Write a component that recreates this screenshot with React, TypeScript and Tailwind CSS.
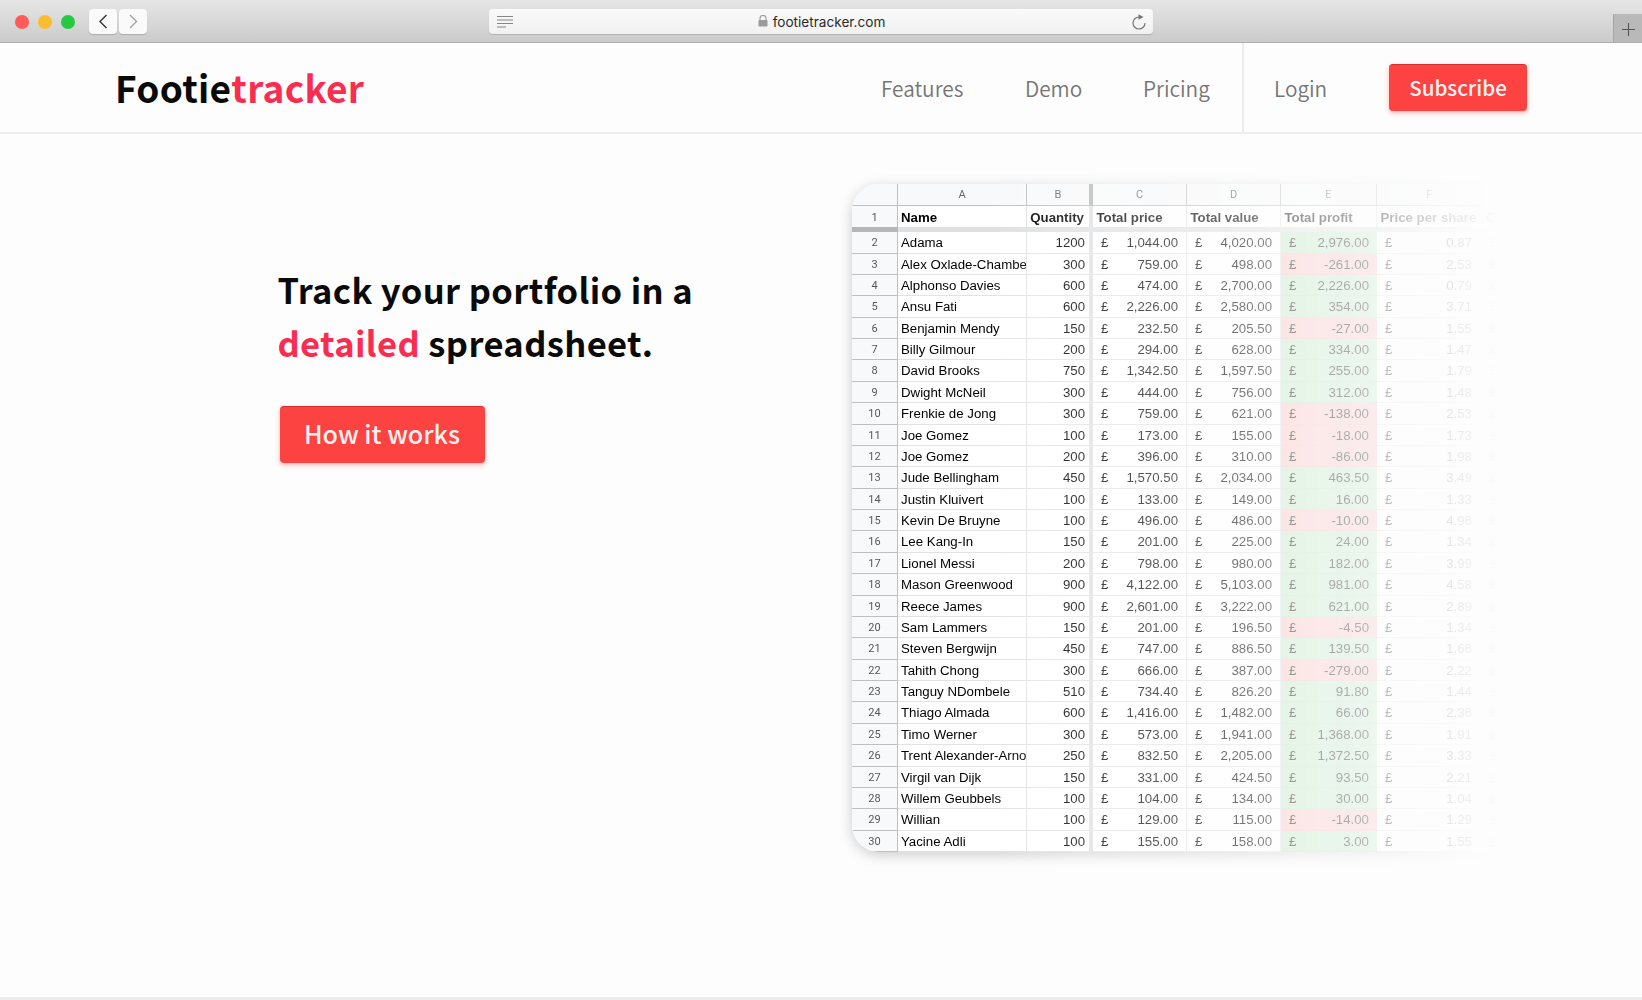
import React from "react";

type Row = [string, string, string, string, string];

const rows: Row[] = [
  ["Adama", "1200", "1,044.00", "4,020.00", "2,976.00"],
  ["Alex Oxlade-Chambe", "300", "759.00", "498.00", "-261.00"],
  ["Alphonso Davies", "600", "474.00", "2,700.00", "2,226.00"],
  ["Ansu Fati", "600", "2,226.00", "2,580.00", "354.00"],
  ["Benjamin Mendy", "150", "232.50", "205.50", "-27.00"],
  ["Billy Gilmour", "200", "294.00", "628.00", "334.00"],
  ["David Brooks", "750", "1,342.50", "1,597.50", "255.00"],
  ["Dwight McNeil", "300", "444.00", "756.00", "312.00"],
  ["Frenkie de Jong", "300", "759.00", "621.00", "-138.00"],
  ["Joe Gomez", "100", "173.00", "155.00", "-18.00"],
  ["Joe Gomez", "200", "396.00", "310.00", "-86.00"],
  ["Jude Bellingham", "450", "1,570.50", "2,034.00", "463.50"],
  ["Justin Kluivert", "100", "133.00", "149.00", "16.00"],
  ["Kevin De Bruyne", "100", "496.00", "486.00", "-10.00"],
  ["Lee Kang-In", "150", "201.00", "225.00", "24.00"],
  ["Lionel Messi", "200", "798.00", "980.00", "182.00"],
  ["Mason Greenwood", "900", "4,122.00", "5,103.00", "981.00"],
  ["Reece James", "900", "2,601.00", "3,222.00", "621.00"],
  ["Sam Lammers", "150", "201.00", "196.50", "-4.50"],
  ["Steven Bergwijn", "450", "747.00", "886.50", "139.50"],
  ["Tahith Chong", "300", "666.00", "387.00", "-279.00"],
  ["Tanguy NDombele", "510", "734.40", "826.20", "91.80"],
  ["Thiago Almada", "600", "1,416.00", "1,482.00", "66.00"],
  ["Timo Werner", "300", "573.00", "1,941.00", "1,368.00"],
  ["Trent Alexander-Arno", "250", "832.50", "2,205.00", "1,372.50"],
  ["Virgil van Dijk", "150", "331.00", "424.50", "93.50"],
  ["Willem Geubbels", "100", "104.00", "134.00", "30.00"],
  ["Willian", "100", "129.00", "115.00", "-14.00"],
  ["Yacine Adli", "100", "155.00", "158.00", "3.00"],
];

const perShare = (price: string, quantity: string) =>
  (parseFloat(price.replace(",", "")) / parseFloat(quantity)).toFixed(2);

const COLS = "grid grid-rows-[100%] grid-cols-[46px_129px_62px_4px_94px_94px_96px_105px_1fr]";

function Money({ value, className = "pr-[9px]" }: { value: string; className?: string }) {
  return (
    <div className={"flex items-center justify-between border-b border-[#e2e3e3] pl-[8px] " + className}>
      <span>£</span>
      <span>{value}</span>
    </div>
  );
}

function Sheet() {
  return (
    <div className="h-[740px] w-[700px] pt-[30px] pl-[30px] [mask-image:linear-gradient(to_right,#000_0px,#000_170px,rgba(0,0,0,0.82)_235px,rgba(0,0,0,0.68)_310px,rgba(0,0,0,0.58)_400px,rgba(0,0,0,0.38)_480px,rgba(0,0,0,0.27)_560px,rgba(0,0,0,0.08)_635px,transparent_678px)]">
      <div className="h-[668px] w-[670px] overflow-hidden rounded-l-[27px] bg-white font-['Liberation_Sans',Arial,sans-serif] text-[13.25px] text-black shadow-[0_3px_14px_rgba(0,0,0,0.2)]">
        <div className={COLS + " h-[22px] bg-[#f8f9fa] font-['Roboto',sans-serif] text-[11px] text-[#66696c]"}>
          <div className="border-r border-b border-[#c0c0c0]" />
          {["A", "B"].map((c) => (
            <div key={c} className={"flex items-center justify-center border-b border-[#c0c0c0] pt-[2px] " + (c === "A" ? "border-r" : "")}>{c}</div>
          ))}
          <div className="bg-[#b7b7b7]" />
          {["C", "D", "E", "F"].map((c) => (
            <div key={c} className="flex items-center justify-center border-r border-b border-[#c0c0c0] pt-[2px]">{c}</div>
          ))}
          <div />
        </div>
        <div className={COLS + " h-[21px] items-stretch font-bold leading-[24px] whitespace-nowrap"}>
          <div className="border-r border-[#c0c0c0] bg-[#f8f9fa] text-center font-['Roboto',sans-serif] text-[11px] font-normal text-[#55585b]">1</div>
          <div className="border-r border-[#e2e3e3] pl-[3px]">Name</div>
          <div className="pr-[5px] text-right">Quantity</div>
          <div className="bg-[#dfe0e2]" />
          <div className="border-r border-[#e2e3e3] pl-[3.5px]">Total price</div>
          <div className="border-r border-[#e2e3e3] pl-[3.5px]">Total value</div>
          <div className="border-r border-[#e2e3e3] pl-[3.5px]">Total profit</div>
          <div className="border-r border-[#e2e3e3] pl-[3.5px]">Price per share</div>
          <div className="pl-[4px]">C</div>
        </div>
        <div className="flex h-[5px] bg-[#dfe0e2]">
          <div className="w-[46px] bg-[#b7b7b7]" />
        </div>
        {rows.map(([name, qty, price, value, profit], i) => (
          <div key={i} className={COLS + " leading-[21px] whitespace-nowrap " + (i % 8 === 0 || i % 8 === 3 || i % 8 === 6 ? "h-[22px]" : "h-[21px]")}>
            <div className="border-r border-b border-[#c0c0c0] bg-[#f8f9fa] text-center font-['Roboto',sans-serif] text-[11px] text-[#55585b]">{i + 2}</div>
            <div className="overflow-hidden border-r border-b border-[#e2e3e3] pl-[3px]">{name}</div>
            <div className="border-b border-[#e2e3e3] pr-[4px] text-right">{qty}</div>
            <div className="bg-[#dfe0e2]" />
            <Money value={price} className="border-r pr-[8px]" />
            <Money value={value} className="border-r pr-[8px]" />
            <Money value={profit} className={profit.startsWith("-") ? "border-b-[#f4c0c0] bg-[#f9c4c4] pr-[8px]" : "border-b-[#bce0c2] bg-[#c3e8c8] pr-[8px]"} />
            <Money value={perShare(price, qty)} className="pr-[10px]" />
            <Money value="" />
          </div>
        ))}
      </div>
    </div>
  );
}

function BrowserBar() {
  return (
    <div className="flex h-[43px] items-center border-b border-[#b0b0b0] bg-linear-to-b from-[#e6e6e6] to-[#cbcbcb] pt-px">
      <div className="flex w-[489px] items-center">
        <div className="ml-[14.5px] flex gap-[9px]">
          <div className="size-[14px] rounded-full bg-[#fc5b57]" />
          <div className="size-[14px] rounded-full bg-[#fdbc2e]" />
          <div className="size-[14px] rounded-full bg-[#28c840]" />
        </div>
        <div className="ml-[14.5px] flex gap-[2px]">
          {["M17.5 6 L11 12.5 L17.5 19", "M11 6 L17.5 12.5 L11 19"].map((d, i) => (
            <div key={d} className="h-[25px] w-[28px] rounded-[4px] bg-[#fafafa] shadow-[0_1px_1px_rgba(0,0,0,0.18)]">
              <svg width="28" height="25" viewBox="0 0 28 25" fill="none" stroke={i ? "#a3a3a3" : "#333"} strokeWidth="1.4">
                <path d={d} />
              </svg>
            </div>
          ))}
        </div>
      </div>
      <div className="flex h-[25px] w-[664px] items-center justify-between rounded-[4px] bg-linear-to-b from-[#fafafa] to-[#f1f1f1] px-[7px] shadow-[0_1px_1px_rgba(0,0,0,0.15)]">
        <svg width="17" height="13" viewBox="0 0 17 13" stroke="#858585" strokeWidth="1.1">
          <path d="M1 1.5H17M1 5H17M1 8.5H17M1 12H10" />
        </svg>
        <div className="flex items-center gap-[5px] pr-[2px] font-['Inter',sans-serif] text-[13.6px] text-[#2a2a2a]">
          <svg width="10" height="12" viewBox="0 0 10 12">
            <path d="M2 6V3.5a3 3 0 0 1 6 0V6" fill="none" stroke="#9b9b9b" strokeWidth="1.1" />
            <rect x="0.5" y="5" width="9" height="6.5" rx="0.8" fill="#9b9b9b" />
          </svg>
          <span className="pt-px">footietracker.com</span>
        </div>
        <svg width="14" height="16" viewBox="0 0 14 16" fill="none" stroke="#777" strokeWidth="1.2">
          <path d="M13 9A6 6 0 1 1 7 3" />
          <path d="M6.5 0.3L11.5 3L6.5 5.7Z" fill="#777" stroke="none" />
        </svg>
      </div>
      <div className="ml-auto flex h-[28px] w-[29px] items-center justify-center self-end border-l border-[#a5a5a5] bg-[#b9b9b9] pt-[2px]">
        <svg width="13" height="13" viewBox="0 0 13 13" stroke="#555" strokeWidth="1.1">
          <path d="M6.5 0V13M0 6.5H13" />
        </svg>
      </div>
    </div>
  );
}

export default function App() {
  return (
    <div className="flex h-[1000px] w-[1642px] flex-col overflow-hidden bg-[#fdfdfd] font-['Noto_Sans_CJK_SC',sans-serif]">
      <BrowserBar />
      <nav className="flex h-[91px] shrink-0 border-b-2 border-[#ededed] whitespace-nowrap">
        <div className="flex w-[765px] items-center pl-[115px] text-[37px] font-bold tracking-[0.3px] text-[#0a0a0a]">
          Footie<span className="text-[#fa2d50]">tracker</span>
        </div>
        <div className="flex w-[479px] items-center border-r-2 border-[#ededed] pt-[2px] text-[20.8px] font-[350] text-[#757575]">
          <a className="ml-[116px] w-[144px]">Features</a>
          <a className="w-[118px]">Demo</a>
          <a>Pricing</a>
        </div>
        <a className="flex w-[145px] items-center pt-[2px] pl-[30px] text-[20.8px] font-[350] text-[#757575]">Login</a>
        <div className="flex items-center">
          <button className="h-[47px] w-[138px] rounded-[4px] border-t border-[#d32f2f] bg-[#fd4242] pb-px text-[20.6px] font-medium text-[#fff2f2] shadow-[0_2px_5px_rgba(253,66,66,0.4)]">Subscribe</button>
        </div>
      </nav>
      <main className="flex flex-1">
        <section className="w-[822px] pt-[129px] pl-[277.5px] whitespace-nowrap">
          <h1 className="text-[34.5px] leading-[53px] font-bold tracking-[0.38px] text-[#0a0a0a]">
            Track your portfolio in a<br />
            <span className="text-[#fa2d50]">detailed</span> spreadsheet.
          </h1>
          <button className="mt-[37px] ml-[2px] h-[57px] w-[205px] rounded-[4px] border-t border-[#d32f2f] bg-[#fd4242] pb-[2px] text-[25.1px] font-medium text-[#fff0f0] shadow-[0_2px_5px_rgba(253,66,66,0.4)]">How it works</button>
        </section>
        <section className="pt-[20px]">
          <Sheet />
        </section>
      </main>
      <footer className="h-[3px] shrink-0 bg-[#ededed]" />
    </div>
  );
}
